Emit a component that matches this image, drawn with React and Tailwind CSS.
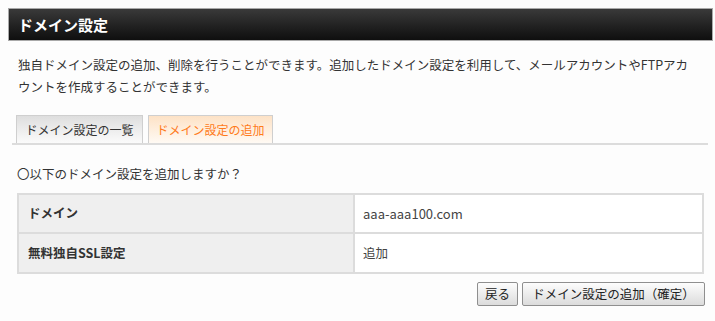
export default function App() {
  const font = { fontFamily: '"Noto Sans CJK JP", "Noto Sans", sans-serif' }

  return (
    <div className="w-[715px] h-[321px] bg-[#fdfdfd] text-[#333] pt-2 overflow-hidden" style={font}>
      {/* Title bar */}
      <div className="ml-2 mr-[2px] h-[33px] border border-[#a9a9a9] bg-gradient-to-b from-[#3a3a3a] to-[#0f0f0f] flex items-center pl-[9px]">
        <h1 className="text-white text-[15px] font-bold leading-none">ドメイン設定</h1>
      </div>

      {/* Description */}
      <p className="mt-[13px] ml-[18px] mr-[12px] text-[12.5px] leading-[22px]">
        独自ドメイン設定の追加、削除を行うことができます。追加したドメイン設定を利用して、メールアカウントやFTPアカ
        <br />
        ウントを作成することができます。
      </p>

      {/* Tabs */}
      <div className="mt-[17px] ml-3 mr-[7px] flex items-end gap-[5px] pl-1 border-b-2 border-[#dcdcdc]">
        <div className="h-[28px] w-[127px] flex items-center justify-center border border-b-0 border-[#cfcfcf] bg-gradient-to-b from-[#dedede] to-[#fbfbfb] text-[12px] text-[#333]">
          ドメイン設定の一覧
        </div>
        <div className="h-[28px] w-[125px] flex items-center justify-center border border-b-0 border-[#cfcfcf] bg-gradient-to-b from-[#fde2c6] to-[#fffaf4] text-[12px] text-[#ff7a1a]">
          ドメイン設定の追加
        </div>
      </div>

      {/* Question */}
      <p className="mt-[19px] ml-[17px] text-[12.5px] leading-[20px]">〇以下のドメイン設定を追加しますか？</p>

      {/* Table */}
      <table className="mt-[9px] ml-[17px] w-[687px] border-collapse text-[12.5px]">
        <tbody>
          <tr className="h-[39px]">
            <th className="w-[336px] border-2 border-[#dcdcdc] bg-[#efefef] text-left font-bold pl-[9px] text-[#333]">ドメイン</th>
            <td className="border-2 border-[#dcdcdc] bg-white pl-[8px] text-[#444] text-[13px]">aaa-aaa100.com</td>
          </tr>
          <tr className="h-[40px]">
            <th className="border-2 border-[#dcdcdc] bg-[#efefef] text-left font-bold pl-[9px] text-[#333]">無料独自SSL設定</th>
            <td className="border-2 border-[#dcdcdc] bg-white pl-[8px] text-[#444]">追加</td>
          </tr>
        </tbody>
      </table>

      {/* Buttons */}
      <div className="mt-[8px] mr-[10px] flex justify-end gap-[4px]">
        <button className="h-[24px] w-[41px] border border-[#8f8f8f] rounded-[2px] bg-gradient-to-b from-[#fdfdfd] to-[#dcdcdc] text-[12.5px] text-[#222]">
          戻る
        </button>
        <button className="h-[24px] w-[183px] border border-[#8f8f8f] rounded-[2px] bg-gradient-to-b from-[#fdfdfd] to-[#dcdcdc] text-[12.5px] text-[#222]">
          ドメイン設定の追加（確定）
        </button>
      </div>
    </div>
  )
}
